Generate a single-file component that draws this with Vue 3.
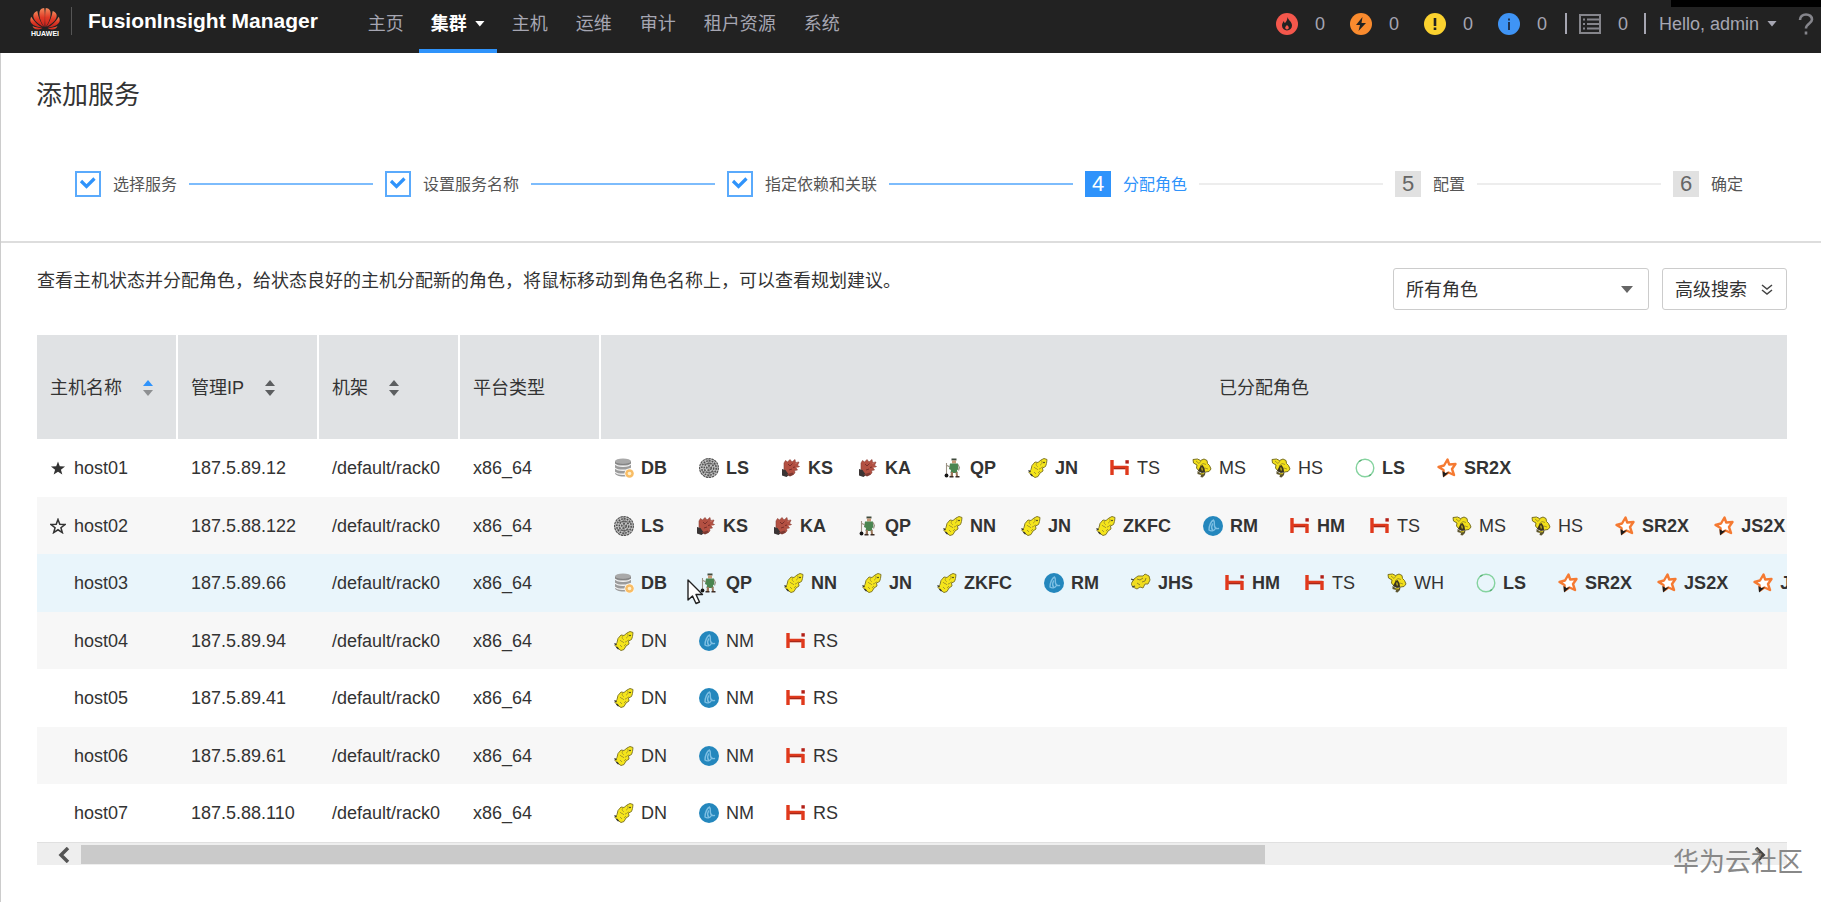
<script setup>
import { ref } from 'vue'

const nav = [
  { label: '主页' },
  { label: '集群', active: true },
  { label: '主机' },
  { label: '运维' },
  { label: '审计' },
  { label: '租户资源' },
  { label: '系统' }
]

const alarms = [
  { id: 'critical', name: '紧急告警', count: 0 },
  { id: 'major', name: '重要告警', count: 0 },
  { id: 'minor', name: '次要告警', count: 0 },
  { id: 'info', name: '提示告警', count: 0 }
]

const steps = [
  { label: '选择服务', state: 'done' },
  { label: '设置服务名称', state: 'done' },
  { label: '指定依赖和关联', state: 'done' },
  { label: '分配角色', state: 'current' },
  { label: '配置', state: 'todo' },
  { label: '确定', state: 'todo' }
]

const columns = [
  { label: '主机名称', sort: 'asc' },
  { label: '管理IP', sort: 'none' },
  { label: '机架', sort: 'none' },
  { label: '平台类型' }
]

const role = ref('all')

// role: [icon, name, strong, tight gap after it]
const worker = [
  ['hadoop', 'DN'],
  ['yarn', 'NM'],
  ['hbase', 'RS']
]

const hosts = [
  {
    name: 'host01', ip: '187.5.89.12', star: 'star-full',
    roles: [
      ['db', 'DB', 1], ['ldap', 'LS', 1], ['krb', 'KS', 1, 1], ['krb', 'KA', 1],
      ['zk', 'QP', 1], ['hadoop', 'JN', 1], ['hbase', 'TS'], ['hive', 'MS', 0, 1],
      ['hive', 'HS'], ['loader', 'LS', 1], ['spark', 'SR2X', 1]
    ]
  },
  {
    name: 'host02', ip: '187.5.88.122', star: 'star-line',
    roles: [
      ['ldap', 'LS', 1], ['krb', 'KS', 1, 1], ['krb', 'KA', 1], ['zk', 'QP', 1],
      ['hadoop', 'NN', 1, 1], ['hadoop', 'JN', 1, 1], ['hadoop', 'ZKFC', 1], ['yarn', 'RM', 1],
      ['hbase', 'HM', 1, 1], ['hbase', 'TS'], ['hive', 'MS', 0, 1], ['hive', 'HS'],
      ['spark', 'SR2X', 1, 1], ['spark', 'JS2X', 1]
    ]
  },
  {
    name: 'host03', ip: '187.5.89.66', hover: true,
    roles: [
      ['db', 'DB', 1], ['zk', 'QP', 1], ['hadoop', 'NN', 1, 1], ['hadoop', 'JN', 1, 1],
      ['hadoop', 'ZKFC', 1], ['yarn', 'RM', 1], ['mapred', 'JHS', 1], ['hbase', 'HM', 1, 1],
      ['hbase', 'TS'], ['hive', 'WH'], ['loader', 'LS', 1], ['spark', 'SR2X', 1, 1],
      ['spark', 'JS2X', 1, 1], ['spark', 'J', 1]
    ]
  },
  { name: 'host04', ip: '187.5.89.94', roles: worker },
  { name: 'host05', ip: '187.5.89.41', roles: worker },
  { name: 'host06', ip: '187.5.89.61', roles: worker },
  { name: 'host07', ip: '187.5.88.110', roles: worker }
]
</script>

<template>
  <div class="page">
    <svg class="defs" aria-hidden="true">
      <symbol id="db" viewBox="0 0 20 20">
        <path d="M1 3v12c0 2 4 3.500 8 3.500s8-1.500 8-3.500V3z" fill="#9b9b9b" />
        <ellipse cx="9" cy="3.200" rx="8" ry="2.800" fill="#a9a9a9" />
        <path d="M1 6c2 3 14 3 16 0M1 10c2 3 14 3 16 0M1 14c2 3 14 3 16 0" fill="none" stroke="#f2f2f2" stroke-width="1.300" />
        <path d="M1 4.500c2 2.500 14 2.500 16 0" fill="none" stroke="#777" stroke-width=".8" />
        <circle cx="15.500" cy="15.500" r="5" fill="#fff" />
        <circle cx="15.500" cy="15.500" r="4.300" fill="#f8bd66" />
        <circle cx="15.500" cy="15.500" r="1.800" fill="#fff1cf" />
      </symbol>
      <symbol id="ldap" viewBox="0 0 20 20">
        <circle cx="10" cy="10" r="9.400" fill="#c4c4c4" stroke="#555" stroke-width="1.200" stroke-dasharray="2.500 .6" />
        <g fill="none" stroke="#4c4c4c" stroke-width="1.500" stroke-dasharray="1.800 1">
          <circle cx="10" cy="10" r="7.200" />
          <circle cx="10" cy="10" r="4.700" />
          <circle cx="10" cy="10" r="2.200" />
        </g>
        <path d="M3 7c4-2 10-2 14 0M3 13c4 2 10 2 14 0M10 1v18" fill="none" stroke="#666" stroke-width=".8" />
      </symbol>
      <symbol id="krb" viewBox="0 0 20 20">
        <path d="M3 5l1.500-2.500L6.500 4 9 1.500l2 2.500 3-2.500.5 3 3.500-.5-1.500 3.500 2 1-3.500 1.500 1.500 2-3 .5.500 2.500L11 17l-5-1-3-5z" fill="#b35042" stroke="#8a3c33" stroke-width=".6" />
        <path d="M1 11l3.500 1L8 17l-2.500 2L1 17.500z" fill="#3a3434" />
        <path d="M5.500 16.500l3.500 2 4-2-1.500-2z" fill="#7d3a32" />
        <path d="M7 6l2 2 2.500-2.500M12 9.500l2-.5M8 12l3-1" fill="none" stroke="#7a2f2a" stroke-width="1" />
        <path d="M15 5.500l1-1M15.500 9.500h1.500" stroke="#e3a79b" stroke-width="1" />
      </symbol>
      <symbol id="zk" viewBox="0 0 20 20">
        <path d="M8.500.5h5v2h-5z" fill="#3f4a3c" />
        <path d="M9 2.500h4v3H9z" fill="#c89a78" />
        <path d="M7 5.500h8l.5 6-1.500.5.500 3H7.500l.5-3-2-1z" fill="#4a8550" />
        <path d="M8 14h2v4H7.500zM12.500 14h2l.5 4h-2z" fill="#9a765a" />
        <path d="M6.500 18h4v1.500h-4zM12.500 18h4v1.500h-4z" fill="#3c2d26" />
        <path d="M3.500 5v12M3 7l4 2M15 6.500l1.500 3-1 3" fill="none" stroke="#9c9284" stroke-width="1.100" />
        <circle cx="3.500" cy="17.500" r="1.900" fill="#151515" />
      </symbol>
      <symbol id="hadoop" viewBox="0 0 20 20">
        <path d="M13 2l3-1.500 3 1-.500 4-1 3-3 1.500.5 3-3 2-2 3.500-3 1-3-2-3-3 2-3 1-4 3-3.500 3 .5z" fill="#f5e51b" stroke="#857c2c" stroke-width="1" stroke-linejoin="round" />
        <path d="M13 2.500c2 1 1 4-1 4.500M9 5c-2 2 0 3 1 4M6 9c1 2 3 1 4 3M11 11c2 0 2-2 4-2M6 14l2 2M12 13l-2 2" fill="none" stroke="#a2932a" stroke-width=".9" />
        <path d="M.5 12.500l2 1.500M2.500 16l2 2" stroke="#333" stroke-width="1.400" />
        <circle cx="16" cy="4.500" r=".8" fill="#222" />
      </symbol>
      <symbol id="mapred" viewBox="0 0 20 20">
        <path d="M3 6l4-3 5 0 2-2 4 2 1 4-2 4-3 0-2 4-3-1-3 2-4-2-2-3z" fill="#f0dc1e" stroke="#857c2c" stroke-width="1" stroke-linejoin="round" />
        <path d="M6 6l3 1 3-2M11 9l3-1 1-3M6 10l3 2" fill="none" stroke="#8f8128" />
        <path d="M0 6l3 1M1 14l3-1" stroke="#444" stroke-width="1.300" />
      </symbol>
      <symbol id="yarn" viewBox="0 0 20 20">
        <circle cx="10" cy="10" r="10" fill="#2487bd" />
        <path d="M6 14c0-4 2-9 4.500-10 1.500 1 .5 4 1 6s2 3 4 2.500M6 14c2 1.500 5 1 6-1M9.500 8c-1.500 3-1.500 4 0 6" fill="none" stroke="#7dbfe3" stroke-width="1.400" stroke-linecap="round" />
      </symbol>
      <symbol id="hbase" viewBox="0 0 20 20">
        <path d="M2 2v15M2 9.500h15.500M17 8v9" fill="none" stroke="#e0391c" stroke-width="3.400" />
        <path d="M15.400 2.200h3.400v3.400h-3.400z" fill="#b31f16" />
        <path d="M4 10.500h11" stroke="#a5281b" stroke-width="1.200" />
      </symbol>
      <symbol id="hive" viewBox="0 0 20 20">
        <path d="M1 1.500l4.500-.5 3 1.500L12 1l3 1.500.5 3 2 2 1.500 3.500-2 2.500-3.500.5L11 12l-4 1-2.500-3L5 7 1.500 5z" fill="#f2df1b" stroke="#7a7222" stroke-width="1" stroke-linejoin="round" />
        <path d="M4 3l3 2.500L9 3M8 8l3-2.500 3 1M13 10l3 1" fill="none" stroke="#a89a24" />
        <path d="M8.500 8l2-1 2 3 .5 4-3 1-4-2z" fill="#3b3420" />
        <path d="M5.500 13l3 2 5-1-.5 3-2.500 2.500-2-.5.500-2-3.500-1z" fill="#5d5530" />
        <path d="M9.800 9.500l.5 3M8.500 16l3.500-.5" stroke="#d9c81e" stroke-width="1.200" />
      </symbol>
      <symbol id="loader" viewBox="0 0 20 20">
        <circle cx="10" cy="10" r="8.800" fill="none" stroke="#85d39f" stroke-width="1.400" />
        <path d="M4 3.500l2.500-1.500M16 16.500l-2 1.500" stroke="#58ad74" stroke-width="1.400" />
      </symbol>
      <symbol id="spark" viewBox="0 0 20 20">
        <path d="M10.500 1.500l1.700 5 6.300-.5-3.500 5 2 6-5.500-2.500L7 17.500 6.500 12 1.500 9l5.500-1.500z" fill="#fff" stroke="#f57a32" stroke-width="2.400" stroke-linejoin="round" />
        <path d="M5.500 13l3 2 3.500-1-2.500 2.500L6 19.500z" fill="#1c1c1c" />
      </symbol>
      <symbol id="critical" viewBox="0 0 22 22">
        <circle cx="11" cy="11" r="11" fill="#f4574c" />
        <path d="M11.500 4c.5 3 4.500 4.500 4.500 8.500a5 5 0 0 1-10 0c0-2 1-3.500 2-4.500 0 1 .5 2 1 2 1-1 2.500-3 2.500-6z" fill="#222" />
        <path d="M11 12c1 1 1.800 1.700 1.800 2.800a1.800 1.800 0 0 1-3.600 0c0-1 .8-1.800 1.800-2.800z" fill="#f4574c" />
      </symbol>
      <symbol id="major" viewBox="0 0 22 22">
        <circle cx="11" cy="11" r="11" fill="#fa8b2e" />
        <path d="M12.500 4L6 12h4l-1.500 6L16 10h-4.500z" fill="#222" />
      </symbol>
      <symbol id="minor" viewBox="0 0 22 22">
        <circle cx="11" cy="11" r="11" fill="#fbd22f" />
        <path d="M9.700 5h2.600v8H9.700zM9.700 14.500h2.600V17H9.700z" fill="#222" />
      </symbol>
      <symbol id="info" viewBox="0 0 22 22">
        <circle cx="11" cy="11" r="11" fill="#3f94f5" />
        <path d="M10 5.500h2v2h-2zM10 9h2v8h-2z" fill="#1f3350" />
      </symbol>
    </svg>

    <header class="top">
      <a class="logo" href="#" aria-label="HUAWEI">
        <svg width="30" height="22" viewBox="0 0 30 22" aria-hidden="true">
          <defs>
            <linearGradient id="petal" x1="0" y1="0" x2="0" y2="1">
              <stop offset="0" stop-color="#f58a5c" />
              <stop offset=".5" stop-color="#e03a26" />
              <stop offset="1" stop-color="#c8201c" />
            </linearGradient>
          </defs>
          <g fill="url(#petal)">
            <path d="M14.500 19C9.500 13 8.500 5 10 2.500c1-1.800 2.800-2.500 4.200-2.500 1 5 .8 13 .3 19z" />
            <path d="M15.500 19C20.500 13 21.500 5 20 2.500 19 .7 17.200 0 15.800 0c-1 5-.8 13-.3 19z" />
            <path d="M13.700 19C5 14.500 2.500 9.500 3.500 6.500 4 4.800 5.800 3.500 7.300 3 8.300 9.500 11 15 13.700 19z" />
            <path d="M16.300 19C25 14.500 27.500 9.500 26.500 6.500 26 4.800 24.200 3.500 22.700 3 21.700 9.500 19 15 16.300 19z" />
            <path d="M12.500 19.500C5 19 1 16 .4 13.300c-.3-1.500.2-3.300.8-4.500 3 5 7 8.700 11.300 10.700z" />
            <path d="M17.500 19.500c7.500-.5 11.500-3.500 12.100-6.200.3-1.500-.2-3.300-.8-4.500-3 5-7 8.700-11.300 10.700z" />
            <path d="M12.500 20.200c-5 2.400-8 1.700-10-1.900 3 1.200 6 1.700 10 1.900z" />
            <path d="M17.500 20.200c5 2.400 8 1.700 10-1.900-3 1.200-6 1.700-10 1.900z" />
          </g>
        </svg>
        <span>HUAWEI</span>
      </a>
      <span class="product">FusionInsight Manager</span>
      <nav class="nav">
        <a v-for="n in nav" :key="n.label" href="#" :class="{ active: n.active }">
          {{ n.label }}<i v-if="n.active" class="caret"></i>
        </a>
      </nav>
      <div class="status">
        <a v-for="a in alarms" :key="a.id" class="alarm" href="#" :aria-label="a.name">
          <svg width="22" height="22" aria-hidden="true"><use :href="'#' + a.id" /></svg>
          <span>{{ a.count }}</span>
        </a>
        <a class="tasks" href="#" aria-label="任务">
          <svg width="22" height="20" viewBox="0 0 22 20" fill="none" stroke="#85858b" stroke-width="2" aria-hidden="true">
            <path d="M1 1h20v18H1zM4 5.500h2M8 5.500h12M4 10h2M8 10h12M4 14.500h2M8 14.500h12" />
          </svg>
          <span>0</span>
        </a>
        <button class="user" type="button">Hello, admin<i class="caret"></i></button>
        <a class="help" href="#" aria-label="帮助">
          <svg width="16" height="22" viewBox="0 0 16 22" fill="none" stroke="#85858b" stroke-width="2.600" aria-hidden="true">
            <path d="M2 7c0-3.500 2.500-5.500 6-5.500s6 2 6 5c0 4-6 4-6 9M8 18.500v3" />
          </svg>
        </a>
      </div>
      <div class="notch"></div>
    </header>

    <main class="body">
      <h1>添加服务</h1>

      <ol class="steps">
        <li v-for="(s, i) in steps" :key="s.label" :class="s.state">
          <span class="box">
            <svg v-if="s.state === 'done'" width="18" height="16" viewBox="0 0 18 16" fill="none" stroke="#2f93fb" stroke-width="3.200" aria-label="已完成">
              <path d="M2 5l5.500 5.500 8-8" />
            </svg>
            <template v-else>{{ i + 1 }}</template>
          </span>
          <span class="step-label">{{ s.label }}</span>
          <span v-if="i < steps.length - 1" class="line"></span>
        </li>
      </ol>

      <section class="content">
        <div class="toolbar">
          <p>查看主机状态并分配角色，给状态良好的主机分配新的角色，将鼠标移动到角色名称上，可以查看规划建议。</p>
          <div class="filters">
            <label class="picker">
              <select v-model="role" aria-label="角色">
                <option value="all">所有角色</option>
              </select>
              <i class="caret"></i>
            </label>
            <button class="search" type="button">
              高级搜索
              <svg width="14" height="12" viewBox="0 0 14 12" fill="none" stroke="#444" stroke-width="1.500" aria-hidden="true">
                <path d="M2 1l5 4 5-4M2 6l5 4 5-4" />
              </svg>
            </button>
          </div>
        </div>

        <div class="viewport">
          <table>
            <colgroup>
              <col v-for="c in columns" :key="c.label" class="narrow" />
              <col />
            </colgroup>
            <thead>
              <tr>
                <th v-for="c in columns" :key="c.label" scope="col">
                  <button v-if="c.sort" type="button" class="sorter" :class="c.sort">
                    {{ c.label }}
                    <svg width="10" height="18" viewBox="0 0 10 18" aria-hidden="true">
                      <path class="up" d="M0 7l5-6 5 6z" />
                      <path class="down" d="M0 11h10l-5 6z" />
                    </svg>
                  </button>
                  <template v-else>{{ c.label }}</template>
                </th>
                <th scope="col" class="assigned">已分配角色</th>
              </tr>
            </thead>
            <tbody>
              <tr v-for="h in hosts" :key="h.name" :class="{ hover: h.hover }">
                <td>
                  <span class="host">
                    <span class="star">
                      <svg v-if="h.star" width="16" height="16" viewBox="0 0 17 16" :class="h.star" aria-hidden="true">
                        <path d="M8.500 1l1.900 5.200 5.600.2-4.400 3.400 1.500 5.200-4.600-3-4.600 3 1.500-5.200L1 6.400l5.600-.2z" />
                      </svg>
                    </span>
                    {{ h.name }}
                  </span>
                </td>
                <td>{{ h.ip }}</td>
                <td>/default/rack0</td>
                <td>x86_64</td>
                <td>
                  <div class="roles">
                    <span v-for="(r, i) in h.roles" :key="i" class="role" :class="{ strong: r[2], tight: r[3] }">
                      <svg width="20" height="20" aria-hidden="true"><use :href="'#' + r[0]" /></svg>
                      {{ r[1] }}
                    </span>
                  </div>
                </td>
              </tr>
            </tbody>
          </table>
        </div>

        <div class="scrollbar">
          <button type="button" aria-label="向左滚动">
            <svg width="12" height="16" viewBox="0 0 12 16" fill="none" stroke="#555" stroke-width="3.500"><path d="M10 1L3 8l7 7" /></svg>
          </button>
          <div class="track"><div class="thumb"></div></div>
          <button type="button" class="next" aria-label="向右滚动">
            <svg width="12" height="16" viewBox="0 0 12 16" fill="none" stroke="#444" stroke-width="3.500"><path d="M2 1l7 7-7 7" /></svg>
          </button>
        </div>
      </section>
    </main>

    <svg class="pointer" width="18" height="26" viewBox="0 0 18 26" aria-hidden="true">
      <path d="M1 1v20l4.500-4 3.500 7.500 3.500-1.500-3.500-7.500h6.500z" fill="#fff" stroke="#222" stroke-width="1.400" stroke-linejoin="round" />
    </svg>
    <div class="watermark">华为云社区</div>
  </div>
</template>

<style>
body {
  background: #fff;
}
</style>

<style scoped>
.page {
  position: relative;
  display: flex;
  flex-direction: column;
  min-height: 100vh;
  overflow: hidden;
  font: 18px/24px "Liberation Sans", "Noto Sans CJK SC", sans-serif;
  color: #333;
}
.page *,
.page {
  box-sizing: border-box;
}
.defs {
  position: absolute;
  width: 0;
  height: 0;
}
a {
  color: inherit;
  text-decoration: none;
}
button {
  padding: 0;
  border: 0;
  background: none;
  color: inherit;
  font: inherit;
  cursor: pointer;
}
svg {
  flex: none;
  display: block;
}
.caret {
  width: 10px;
  height: 6px;
  background: currentColor;
  clip-path: polygon(0 0, 100% 0, 50% 100%);
}

/* header */
.top {
  position: relative;
  display: flex;
  height: 53px;
  padding-left: 29px;
  background: #222;
  color: #a6a6b2;
}
.logo {
  display: flex;
  flex-direction: column;
  align-items: center;
  align-self: flex-start;
  width: 32px;
  margin-top: 8px;
  color: #fff;
  font-size: 7px;
  font-weight: bold;
  line-height: 8px;
}
.product {
  align-self: flex-start;
  margin: 7px 0 0 10px;
  padding: 2px 0 0 16px;
  border-left: 1px solid #555;
  height: 28px;
  color: #fff;
  font-size: 21px;
  font-weight: bold;
}
.nav {
  display: flex;
  margin-left: 36px;
}
.nav a {
  display: flex;
  align-items: center;
  gap: 8px;
  padding: 0 14px 6px;
  line-height: 28px;
}
.nav .active {
  margin: 0 1px;
  padding: 4px 12px 6px;
  border-bottom: 4px solid #2f93fb;
  color: #fff;
  font-weight: bold;
}
.status {
  display: flex;
  align-items: center;
  margin-left: auto;
  padding: 0 7px 6px 0;
}
.alarm,
.tasks,
.user,
.help {
  display: flex;
  align-items: center;
}
.alarm {
  gap: 17px;
  width: 74px;
}
.alarm span,
.tasks span {
  width: 10px;
}
.tasks {
  gap: 17px;
  height: 21px;
  margin-left: -7px;
  padding: 0 16px 0 12px;
  border-left: 2px solid #a6a6b2;
  border-right: 2px solid #a6a6b2;
}
.user {
  gap: 8px;
  margin-left: 13px;
}
.help {
  margin-left: 21px;
}
.notch {
  position: absolute;
  top: 0;
  right: 0;
  width: 150px;
  height: 7px;
  background: #000;
}

/* wizard */
.body {
  flex: 1;
  padding-top: 23px;
  border-left: 1px solid #ccc;
}
h1 {
  margin: 0 35px;
  font-size: 26px;
  font-weight: normal;
  line-height: 38px;
}
.steps {
  display: flex;
  margin: 57px 0 0;
  padding: 0 78px 44px 74px;
  border-bottom: 2px solid #ddd;
  list-style: none;
  font-size: 16px;
}
.steps li {
  display: flex;
  flex: 1 0 auto;
  align-items: center;
  height: 26px;
}
.steps li:last-child {
  flex: none;
}
.box {
  display: flex;
  align-items: center;
  justify-content: center;
  width: 26px;
  height: 26px;
  background: #e1e1e1;
  color: #666;
  font-size: 22px;
}
.done .box {
  border: 2px solid #5aaafc;
  background: #fff;
}
.current .box {
  background: #2f93fb;
  color: #fff;
}
.step-label {
  margin: 2px 0 0 12px;
  color: #555;
}
.current .step-label {
  color: #2f93fb;
}
.line {
  flex: 1;
  height: 2px;
  margin: 0 12px;
  background: #ededed;
}
.done .line {
  background: #7dbcfc;
}

/* toolbar */
.content {
  padding: 25px 34px 0 36px;
}
.toolbar {
  display: flex;
  justify-content: space-between;
  align-items: flex-start;
}
.toolbar p {
  margin: 0;
  line-height: 26px;
}
.filters {
  display: flex;
  gap: 13px;
}
.picker {
  position: relative;
}
.picker select {
  width: 256px;
  height: 42px;
  padding: 2px 12px 0;
  border: 1px solid #ccc;
  border-radius: 3px;
  background: #fff;
  color: #333;
  font: inherit;
  appearance: none;
}
.picker .caret {
  position: absolute;
  top: 18px;
  right: 16px;
  width: 12px;
  height: 7px;
  color: #666;
  pointer-events: none;
}
.search {
  display: flex;
  align-items: center;
  gap: 13px;
  height: 42px;
  padding: 2px 12px 0;
  border: 1px solid #ccc;
  border-radius: 3px;
  background: #fff;
}

/* table */
.viewport {
  margin-top: 25px;
  overflow: hidden;
}
table {
  width: calc(100% + 142px);
  table-layout: fixed;
  border-collapse: separate;
  border-spacing: 0;
}
.narrow {
  width: 141px;
}
th,
td {
  padding: 0 13px;
  text-align: left;
  white-space: nowrap;
}
th {
  height: 104px;
  padding-top: 2px;
  border-right: 2px solid #fff;
  background: #e0e2e4;
  font-weight: normal;
}
.assigned {
  text-align: center;
}
.sorter {
  display: flex;
  align-items: center;
  gap: 21px;
}
.sorter path {
  fill: #5c5e60;
}
.asc .up {
  fill: #2f93fb;
}
.asc .down {
  fill: #8e9092;
}
td {
  height: 58px;
  overflow: hidden;
}
tbody tr:nth-child(even) {
  background: #f7f7f7;
}
tbody tr:nth-child(even) td {
  height: 57px;
}
tbody .hover {
  background: #e9f5fb;
}
.host {
  display: flex;
  align-items: center;
}
.star {
  width: 24px;
}
.star-full {
  fill: #333;
}
.star-line {
  fill: none;
  stroke: #333;
  stroke-width: 1.6;
}
.roles {
  display: flex;
  gap: 32px;
}
.role {
  display: flex;
  align-items: center;
  gap: 7px;
}
.strong {
  font-weight: bold;
}
.tight {
  margin-right: -7px;
}

/* scrollbar */
.scrollbar {
  display: flex;
  align-items: stretch;
  height: 23px;
  padding: 2px 0 1px;
  border-top: 1px solid #e0e0e0;
  background: #eee;
}
.scrollbar button {
  display: flex;
  align-items: center;
  justify-content: flex-end;
  width: 44px;
  padding-right: 11px;
}
.scrollbar .next {
  width: 38px;
  padding-right: 21px;
}
.track {
  flex: 1;
}
.thumb {
  width: 71%;
  height: 100%;
  background: #cacaca;
}

/* overlays */
.pointer {
  position: absolute;
  left: 687px;
  top: 579px;
}
.watermark {
  position: absolute;
  right: 18px;
  bottom: 22px;
  color: #888;
  font-size: 26px;
  line-height: 36px;
}
</style>
